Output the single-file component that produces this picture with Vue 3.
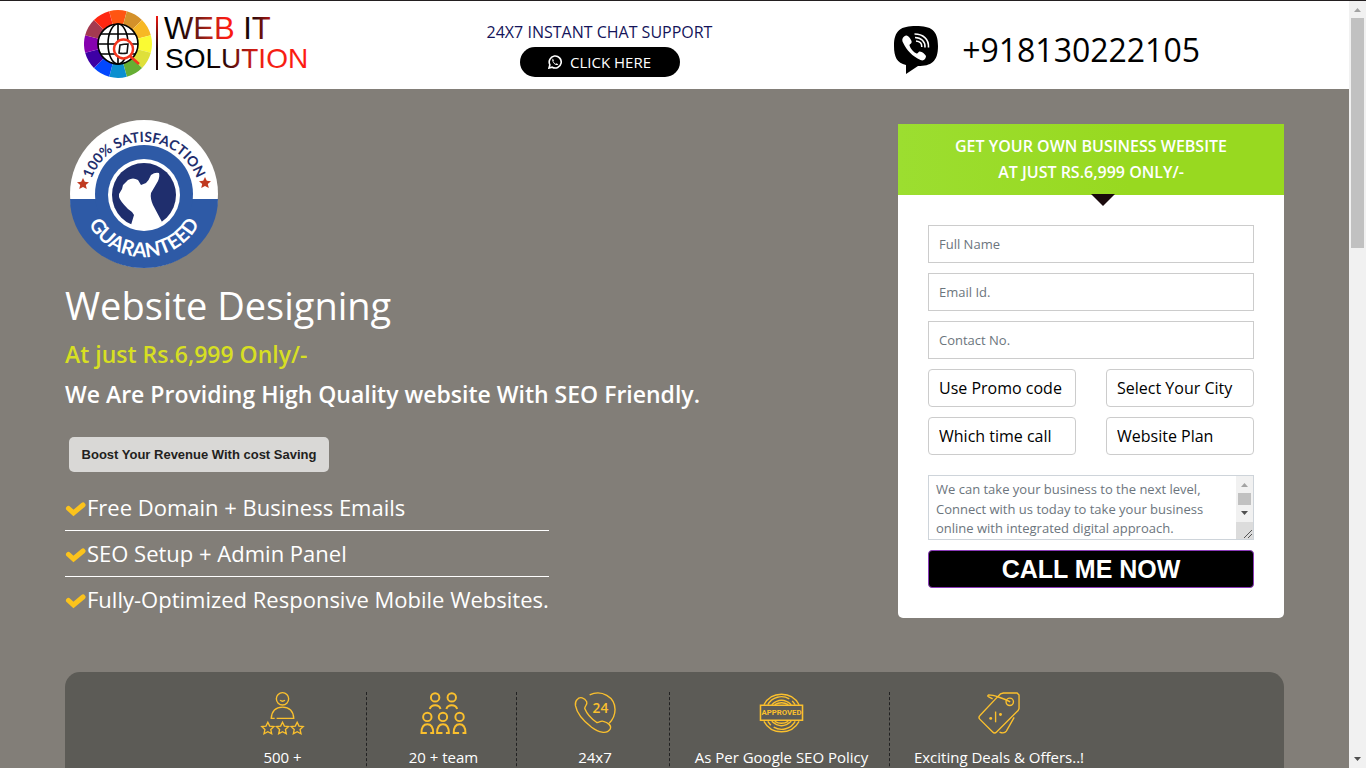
<script setup>
import { ref } from 'vue';

const wheelColors = ['#ff5512', '#d4912a', '#f7b824', '#fafa33', '#dfe03a', '#66ae33',
  '#0a8fd0', '#0247fe', '#3d00a4', '#8601af', '#a33a50', '#fe2712'];

const features = [
  'Free Domain + Business Emails',
  'SEO Setup + Admin Panel',
  'Fully-Optimized Responsive Mobile Websites.',
];

const fields = [
  { name: 'fullName', type: 'text', label: 'Full Name' },
  { name: 'email', type: 'email', label: 'Email Id.' },
  { name: 'contact', type: 'tel', label: 'Contact No.' },
];

const selects = ['Use Promo code', 'Select Your City', 'Which time call', 'Website Plan'];

const stars = [0, 15, 30];
const people = [[15, 0], [32, 0], [7, 20], [23, 20], [40, 20]];

const form = ref({ fullName: '', email: '', contact: '', message: '' });
</script>

<template>
  <div class="window">
    <div class="page">
      <header class="header">
        <div class="container header-row">
          <a href="#" class="logo" aria-label="Web IT Solution">
            <svg width="228" height="72" viewBox="0 0 228 72">
              <defs>
                <linearGradient id="web" gradientUnits="userSpaceOnUse" x1="81" y1="0" x2="189" y2="0">
                  <stop offset="0" stop-color="#000" />
                  <stop offset=".14" stop-color="#180506" />
                  <stop offset=".4" stop-color="#a82318" />
                  <stop offset=".58" stop-color="#ff1a12" />
                  <stop offset=".66" stop-color="#f01a12" />
                  <stop offset=".74" stop-color="#100304" />
                  <stop offset=".84" stop-color="#3a0a0a" />
                  <stop offset="1" stop-color="#c21a14" />
                </linearGradient>
                <linearGradient id="solution" gradientUnits="userSpaceOnUse" x1="81" y1="0" x2="224" y2="0">
                  <stop offset=".3" stop-color="#000" />
                  <stop offset=".42" stop-color="#300808" />
                  <stop offset=".55" stop-color="#a01812" />
                  <stop offset=".68" stop-color="#f02014" />
                  <stop offset="1" stop-color="#ff1a12" />
                </linearGradient>
                <linearGradient id="rule" x1="0" y1="0" x2="0" y2="1">
                  <stop offset="0" stop-color="#f01a12" />
                  <stop offset=".6" stop-color="#200505" />
                </linearGradient>
              </defs>
              <g fill="none" stroke-width="15">
                <circle v-for="(color, i) in wheelColors" :key="i" cx="34" cy="36" r="26.5"
                  :stroke="color" pathLength="12" stroke-dasharray="1 11" :transform="`rotate(${i * 30 - 105} 34 36)`" />
              </g>
              <g fill="#fff" stroke="#000" stroke-width="1.6">
                <circle cx="34" cy="36" r="20" />
                <ellipse cx="34" cy="36" rx="10" ry="20" />
                <path d="M34 16v40M14 36h40M17 26h34M17 46h34" fill="none" />
              </g>
              <circle cx="39.5" cy="41" r="9.5" fill="#fff" stroke="#f4361e" stroke-width="2.4" />
              <path d="M46 48l9 8" stroke="#f4361e" stroke-width="2.4" />
              <path d="M36 37q4-1 8-1l-1 9q-4 1-8 0z" fill="none" stroke="#111" stroke-width="1.6" />
              <rect x="72" y="8" width="2" height="54" fill="url(#rule)" />
              <text x="80" y="31" font-size="31" fill="url(#web)">WEB IT</text>
              <text x="81" y="60" font-size="28" fill="url(#solution)">SOLUTION</text>
            </svg>
          </a>
          <div class="chat">
            <span class="chat-title">24X7 INSTANT CHAT SUPPORT</span>
            <a href="#" class="chat-link">
              <svg width="14" height="14" viewBox="0 0 14 14" fill="none" stroke="#fff" stroke-width="1.6">
                <path d="M1 13l.9-3.2A6 6 0 1 1 4.2 12.2z" />
                <path d="M4.8 3.6C3.6 5 4.5 7 6 8.500s3.200 2.200 4.300.9L8.700 8.300l-.9.7Q6 8 5.200 6.300l.7-.8z" fill="#fff" stroke="none" />
              </svg>
              CLICK HERE
            </a>
          </div>
          <div class="phone">
            <svg width="44" height="48" viewBox="0 0 44 48">
              <path d="M22 0C37 0 44 4 44 20S37 40 24 40L12 48V39C3 37 0 31 0 20 0 4 7 0 22 0z" />
              <path d="M12 9.500c-3.500 1.500-4.500 4-3 7C12.500 24 18.500 30.500 26.500 34c3 1.200 5-.5 5.500-3.500.2-2-5-5.500-6.500-5-1.600.6-1.500 2.500-3 2-3-1.300-6-4.500-7-8-.3-1.500 2-1.600 2.200-3.500.1-2-3.700-7.200-5.700-6.500z" fill="#fff" />
              <path d="M20.500 8C29 8 35 13 34.500 21.500M21 11.500c6 0 10.500 4 10 10M22 15c3.500.3 6 2.500 5.800 6" fill="none" stroke="#fff" stroke-width="1.6" />
            </svg>
            <a href="tel:+918130222105">+918130222105</a>
          </div>
        </div>
      </header>

      <main class="hero">
        <div class="container hero-row">
          <section class="intro">
            <svg class="badge" width="148" height="148" viewBox="0 0 148 148">
              <defs>
                <path id="arcTop" d="M18 78A56 56 0 0 1 130 78" />
                <path id="arcBottom" d="M11 74A63 63 0 0 0 137 74" />
              </defs>
              <circle cx="74" cy="74" r="74" fill="#fff" />
              <path d="M0 79A74 69 0 0 0 148 79z" fill="#2e5aa6" />
              <circle cx="74" cy="74" r="49" fill="#2e5aa6" />
              <circle cx="74" cy="75" r="36" fill="#fff" />
              <circle cx="74" cy="75" r="32" fill="#1f2e6d" />
              <path d="M49 74L52 69 53 65 58 60Q63 57 68 60L71 65 76 63Q79 60 81 55 85 52 89 53 90 56 88 61L81 73Q80 78 83 85L92 102Q76 114 61 105L64 95 62 92 58 89Q50 81 49 77z" fill="#fff" />
              <path d="M13 58l1.800 3.800 4.200.4-3.200 2.800 1 4.100L13 67l-3.800 2.100 1-4.100L7 62.200l4.200-.4zM135 57l1.800 3.800 4.200.4-3.200 2.800 1 4.100L135 66l-3.800 2.100 1-4.100-3.200-2.800 4.200-.4z" fill="#c03a20" />
              <text font-size="14" font-weight="700" fill="#1f2e6d" text-anchor="middle">
                <textPath href="#arcTop" startOffset="50%">100% SATISFACTION</textPath>
              </text>
              <text font-size="20" font-weight="700" fill="#fff" text-anchor="middle">
                <textPath href="#arcBottom" startOffset="50%">GUARANTEED</textPath>
              </text>
            </svg>
            <h1>Website Designing</h1>
            <h2 class="price">At just Rs.6,999 Only/-</h2>
            <h2>We Are Providing High Quality website With SEO Friendly.</h2>
            <button type="button" class="boost">Boost Your Revenue With cost Saving</button>
            <ul class="features">
              <li v-for="feature in features" :key="feature">
                <svg width="22" height="18" viewBox="0 0 22 18">
                  <path d="M3.500 9.500l5 4.500L18 6" fill="none" stroke="#fbc31c" stroke-width="5" stroke-linecap="round" />
                </svg>
                {{ feature }}
              </li>
            </ul>
          </section>

          <form class="card" @submit.prevent>
            <div class="card-head">
              GET YOUR OWN BUSINESS WEBSITE<br />AT JUST RS.6,999 ONLY/-
            </div>
            <div class="card-body">
              <input v-for="field in fields" :key="field.name" v-model="form[field.name]"
                :type="field.type" :placeholder="field.label" :aria-label="field.label" />
              <div class="selects">
                <select v-for="label in selects" :key="label" :aria-label="label">
                  <option>{{ label }}</option>
                </select>
              </div>
              <div class="message">
                <textarea v-model="form.message" aria-label="Message"
                  placeholder="We can take your business to the next level, Connect with us today to take your business online with integrated digital approach."></textarea>
                <svg width="17" height="63" viewBox="0 0 17 63">
                  <path d="M0 0h17v46H0z" fill="#f1f1f1" />
                  <path d="M5 11l3.500-4L12 11z" fill="#a3a3a3" />
                  <path d="M2 17h13v12H2z" fill="#c1c1c1" />
                  <path d="M5 35l3.500 4L12 35z" fill="#505050" />
                  <path d="M0 46h17v17H0z" fill="#dcdcdc" />
                  <path d="M8 62l8-8M12 62l4-4" stroke="#555" />
                </svg>
              </div>
              <button type="submit" class="submit">CALL ME NOW</button>
            </div>
          </form>
        </div>

        <section class="container stats">
          <div class="stat">
            <svg class="icon" viewBox="0 0 44 44">
              <circle cx="22" cy="7" r="6.300" />
              <path d="M19.500 8.500q2.500 2 5 0M16 27h17.500C33 19 29 15.500 22 15.500S11 19 10.500 27H14" />
              <path v-for="x in stars" :key="x" :transform="`translate(${x} 30)`"
                d="M7 1l1.900 3.900 4.300.5-3.200 3 .9 4.300L7 10.600l-3.900 2.100.9-4.300-3.200-3 4.300-.5z" />
            </svg>
            500 +
          </div>
          <div class="stat">
            <svg class="icon bold" viewBox="0 0 48 44">
              <g v-for="([x, y], i) in people" :key="i" :transform="`translate(${x} ${y})`">
                <circle cx="0.500" cy="5.500" r="4.300" />
                <path :d="y ? 'M0 22h-5.500c0-6 2-9 6-9s6 3 6 9h-3' : 'M-5 17.500q1-4 5.500-4t5.500 4'" />
              </g>
            </svg>
            20 + team
          </div>
          <div class="stat">
            <svg class="icon" viewBox="0 0 44 44">
              <path d="M16 3C28-3 42 5 42 18c0 6-3 11-6 14" />
              <path d="M3 8c3-4 8-2 10 2 1 3-2 4-2 7 2 5 6 10 12 14 2 1 4-2 7-1 4 1 9 4 7 8-4 6-12 3-19-2C10 30 3 22 1.500 14Q1 10 3 8z" />
              <text x="19" y="21" font-size="14" font-weight="600">24</text>
            </svg>
            24x7
          </div>
          <div class="stat">
            <svg class="icon" viewBox="0 0 44 44">
              <path d="M4 13a20.500 20.500 0 0 1 36 0M4 30a20.500 20.500 0 0 0 36 0M8 13a16 16 0 0 1 22-6M33 9l3 4M36 30a16 16 0 0 1-22 6M11 34l-3-4M12 13q10-9 20 0M12 30q10 9 20 0M15 13q7-4 14 0M15 30q7 4 14 0" />
              <path d="M.5 13.500h43v15.500H.5z" stroke-width="1.600" />
              <text class="stamp" x="22" y="24" font-size="8" text-anchor="middle" font-weight="700">APPROVED</text>
            </svg>
            As Per Google SEO Policy
          </div>
          <div class="stat">
            <svg class="icon" viewBox="0 0 44 44">
              <path d="M19 6L2 24q-2 2 0 4l13 13q2 2 4 0l22-22 1-2V3l-2-2H26l-3 1-4 4" />
              <circle cx="32.500" cy="10" r="3.800" />
              <path d="M33 10C27 7 16 3 11 3q-2 1 0 2l4 2M37 26l-8 14q-2 3-7 1" />
              <path d="M18 20v11" />
              <circle class="dot" cx="13" cy="27" r="1.500" />
              <circle class="dot" cx="23" cy="23" r="1.500" />
            </svg>
            Exciting Deals &amp; Offers..!
          </div>
        </section>
      </main>
    </div>

    <div class="scrollbar" aria-hidden="true">
      <svg width="17" height="17" viewBox="0 0 17 17"><path d="M5 11l3.500-4L12 11z" fill="#a3a3a3" /></svg>
      <div class="thumb"></div>
      <svg width="17" height="17" viewBox="0 0 17 17"><path d="M5 6l3.500 4L12 6z" fill="#505050" /></svg>
    </div>
  </div>
</template>

<style>
body {
  overflow: hidden;
}
</style>

<style scoped>
* {
  box-sizing: border-box;
}

.window {
  display: flex;
  height: 100vh;
  overflow: hidden;
  border-top: 1px solid #231f20;
  font-family: "Open Sans", "Noto Sans", sans-serif;
}

.page {
  flex: 1;
  min-width: 0;
  overflow: hidden;
  background: #827e78;
}

.container {
  max-width: 1219px;
  margin: 0 auto;
}

.header {
  background: #fff;
}

.header-row {
  display: grid;
  grid-template-columns: 406px 257px 1fr;
  align-items: center;
  height: 88px;
}

.logo {
  padding: 0 0 2px 19px;
  font-family: "Liberation Sans", Arial, sans-serif;
}

.logo svg {
  display: block;
}

.chat {
  display: flex;
  flex-direction: column;
  align-items: center;
  padding-top: 4px;
}

.chat-title {
  font-size: 16px;
  line-height: 30px;
  color: #14145a;
}

.chat-link {
  display: flex;
  align-items: center;
  justify-content: center;
  gap: 8px;
  width: 160px;
  height: 30px;
  border-radius: 15px;
  background: #000;
  color: #fff;
  font-size: 15px;
  text-decoration: none;
}

.phone {
  display: flex;
  align-items: center;
  justify-content: flex-end;
  gap: 24px;
  padding: 9px 84px 0 0;
}

.phone a {
  color: #000;
  font-size: 32px;
  line-height: 40px;
  text-decoration: none;
}

.hero-row {
  display: flex;
  justify-content: space-between;
  align-items: flex-start;
}

.intro {
  padding-top: 31px;
  color: #fff;
}

.badge {
  display: block;
  margin-left: 5px;
  font-family: Lato, sans-serif;
}

h1 {
  margin: 12px 0 4px;
  font-size: 38px;
  line-height: 50px;
  font-weight: 400;
}

h2 {
  margin: 0;
  font-size: 23px;
  line-height: 40px;
  font-weight: 600;
}

.price {
  color: #d7df23;
}

.boost {
  display: block;
  width: 260px;
  height: 35px;
  margin: 23px 0 13px 4px;
  padding: 0;
  border: 0;
  border-radius: 5px;
  background: #d9d8d6;
  color: #231f20;
  font: 700 13px "Liberation Sans", Arial, sans-serif;
}

.features {
  width: fit-content;
  margin: 0 0 50px;
  padding: 0;
  list-style: none;
  font-size: 22px;
  line-height: 45px;
}

.features li {
  display: flex;
  align-items: center;
}

.features li + li {
  border-top: 1px solid #fff;
}

.card {
  width: 386px;
  margin-top: 35px;
  border-radius: 0 0 5px 5px;
  background: #fff;
}

.card-head {
  position: relative;
  padding: 9px 0 10px;
  background: linear-gradient(90deg, #9cde30, #98d920 60%);
  color: #fff;
  font-size: 16px;
  line-height: 26px;
  font-weight: 600;
  text-align: center;
}

.card-head::after {
  content: "";
  position: absolute;
  top: 70px;
  left: 50%;
  border: 12px solid transparent;
  border-top-color: #1a0a0c;
  border-bottom: 0;
}

.card-body {
  display: flex;
  flex-direction: column;
  gap: 10px;
  padding: 30px;
}

input,
select {
  width: 100%;
  height: 38px;
  padding: 0 10px;
  border: 1px solid #ccc;
  background: #fff;
  font-family: inherit;
  font-size: 13px;
}

::placeholder {
  color: #6c757d;
  opacity: 1;
}

.selects {
  display: grid;
  grid-template-columns: 1fr 1fr;
  gap: 10px 30px;
  margin-bottom: 10px;
}

select {
  appearance: none;
  border-radius: 4px;
  color: #000;
  font-size: 16px;
}

.message {
  display: flex;
  height: 65px;
  border: 1px solid #ced4da;
}

textarea {
  flex: 1;
  min-width: 0;
  padding: 4px 7px 0;
  border: 0;
  overflow: hidden;
  resize: none;
  font-family: inherit;
  font-size: 13px;
  line-height: 1.5;
}

.submit {
  height: 38px;
  padding: 0;
  border: 1px solid #8a3ab9;
  border-radius: 4px;
  background: #000;
  color: #fff;
  font: 700 25px "Liberation Sans", Arial, sans-serif;
}

.stats {
  display: grid;
  grid-template-columns: 172px 150px 153px 220px 214px;
  height: 160px;
  padding: 20px 0 20px 130px;
  border-radius: 15px 15px 0 0;
  background: #5c5b56;
  color: #fff;
}

.stat {
  display: flex;
  flex-direction: column;
  align-items: center;
  gap: 11px;
  padding-left: 4px;
  font-size: 15px;
  line-height: 22px;
}

.stat:not(:last-child) {
  border-right: 1px dashed #222;
}

.icon {
  height: 43px;
  overflow: visible;
  fill: none;
  stroke: #fbc02d;
  stroke-width: 1.4;
}

.icon.bold {
  stroke-width: 2;
}

.icon text,
.icon .dot {
  fill: #fbc02d;
  stroke: none;
}

.stamp {
  font-family: Roboto, sans-serif;
}

.scrollbar {
  display: flex;
  flex-direction: column;
  justify-content: space-between;
  width: 17px;
  background: #f1f1f1;
}

.thumb {
  height: 30%;
  margin: 0 2px auto;
  background: #c1c1c1;
}
</style>
